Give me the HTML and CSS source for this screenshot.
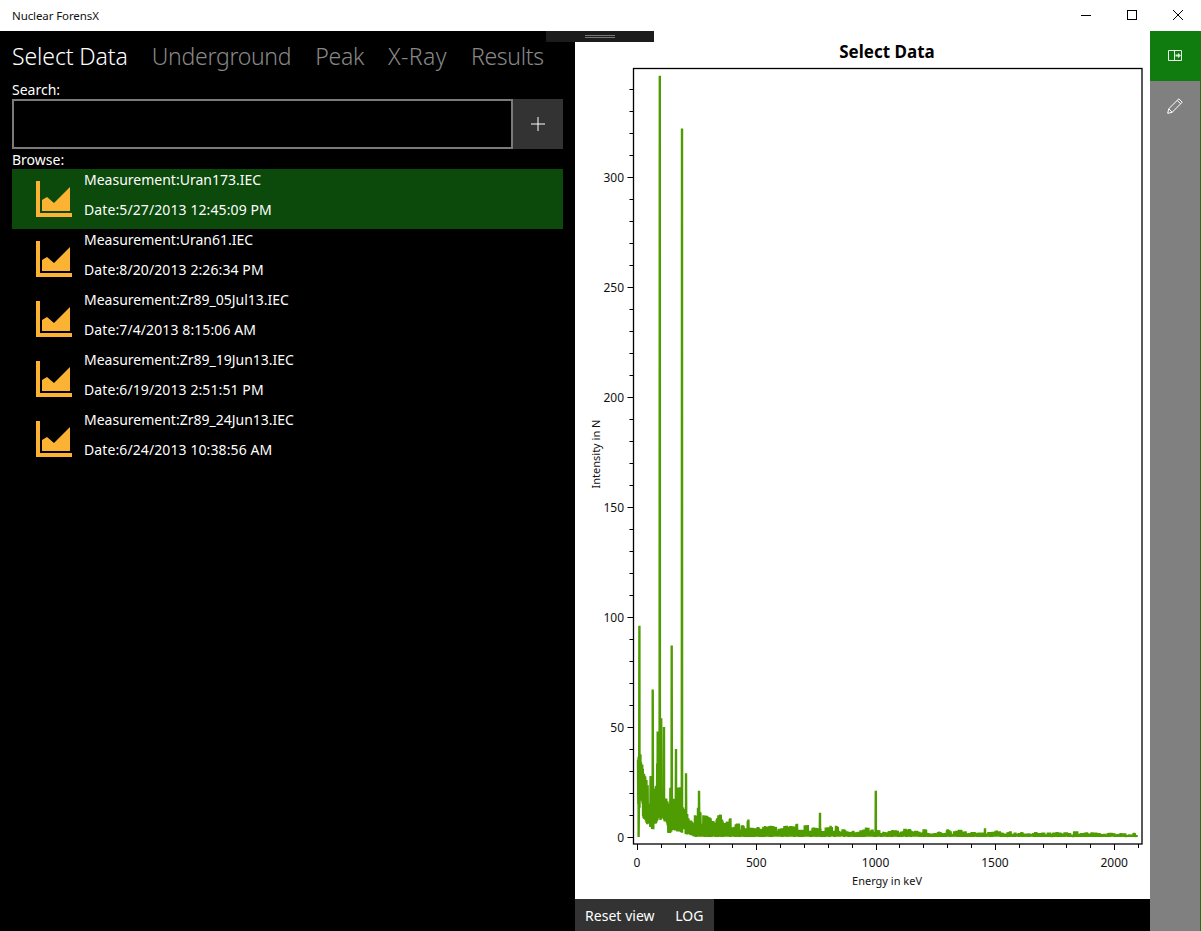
FILE: index.html
```html
<!DOCTYPE html>
<html lang="en">
<head>
<meta charset="utf-8">
<title>Nuclear ForensX</title>
<link rel="stylesheet" href="styles.css">
</head>
<body>
<div class="app">
  <header class="titlebar">
    <span class="app-title">Nuclear ForensX</span>
    <div class="win-controls">
      <button class="win-btn"><svg width="12" height="12" viewBox="0 0 12 12"><path d="M1 5.500h10" stroke="#000" fill="none"/></svg></button>
      <button class="win-btn"><svg width="12" height="12" viewBox="0 0 12 12"><rect x="1.500" y="0.500" width="9" height="9" stroke="#000" fill="none"/></svg></button>
      <button class="win-btn"><svg width="12" height="12" viewBox="0 0 12 12"><path d="M1 0l10 10M11 0L1 10" stroke="#000" fill="none"/></svg></button>
    </div>
  </header>
  <div class="drag-handle"><span class="grip"></span></div>
  <main class="main">
    <section class="left-pane">
      <nav class="pivot">
        <span class="pivot-item active">Select Data</span>
        <span class="pivot-item">Underground</span>
        <span class="pivot-item">Peak</span>
        <span class="pivot-item wide">X-Ray</span>
        <span class="pivot-item">Results</span>
      </nav>
      <label class="field-label search-label">Search:</label>
      <div class="search-row">
        <div class="search-box"></div>
        <button class="add-btn"><svg width="16" height="16" viewBox="0 0 16 16"><path d="M8 1v14M1 8h14" stroke="#fff" fill="none"/></svg></button>
      </div>
      <label class="field-label browse-label">Browse:</label>
      <ul class="list">
        <li class="row selected">
          <svg class="chart-icon" viewBox="0 0 36 36"><path d="M0 0h4v32h32v4H0z M6 30V19l5-3 7 6L34 6v24z"/></svg>
          <div class="row-text"><span>Measurement:Uran173.IEC</span><span class="row-date">Date:5/27/2013 12:45:09 PM</span></div>
        </li>
        <li class="row">
          <svg class="chart-icon" viewBox="0 0 36 36"><path d="M0 0h4v32h32v4H0z M6 30V19l5-3 7 6L34 6v24z"/></svg>
          <div class="row-text"><span>Measurement:Uran61.IEC</span><span class="row-date">Date:8/20/2013 2:26:34 PM</span></div>
        </li>
        <li class="row">
          <svg class="chart-icon" viewBox="0 0 36 36"><path d="M0 0h4v32h32v4H0z M6 30V19l5-3 7 6L34 6v24z"/></svg>
          <div class="row-text"><span>Measurement:Zr89_05Jul13.IEC</span><span class="row-date">Date:7/4/2013 8:15:06 AM</span></div>
        </li>
        <li class="row">
          <svg class="chart-icon" viewBox="0 0 36 36"><path d="M0 0h4v32h32v4H0z M6 30V19l5-3 7 6L34 6v24z"/></svg>
          <div class="row-text"><span>Measurement:Zr89_19Jun13.IEC</span><span class="row-date">Date:6/19/2013 2:51:51 PM</span></div>
        </li>
        <li class="row">
          <svg class="chart-icon" viewBox="0 0 36 36"><path d="M0 0h4v32h32v4H0z M6 30V19l5-3 7 6L34 6v24z"/></svg>
          <div class="row-text"><span>Measurement:Zr89_24Jun13.IEC</span><span class="row-date">Date:6/24/2013 10:38:56 AM</span></div>
        </li>
      </ul>
    </section>
    <section class="chart-pane">
      <div class="chart-area">
        <svg id="chart" class="chart" width="575" height="868" viewBox="575 31 575 868"></svg>
      </div>
      <div class="bottom-bar">
        <button class="bar-btn">Reset view</button>
        <button class="bar-btn">LOG</button>
      </div>
    </section>
    <aside class="side-rail">
      <button class="rail-btn active">
        <svg width="14" height="11" viewBox="0 0 14 11"><path d="M.5.500h13v10H.5zM6.500.500v10" fill="none" stroke="#fff" opacity=".9"/><path d="M7.500 4.500h2.500V3l3 2.500-3 2.500V6.500H7.500z" fill="#fff" opacity=".85"/></svg>
      </button>
      <button class="rail-btn">
        <svg width="16" height="16" viewBox="0 0 16 16"><path d="M.7 15.300l1-4.500L11.800.8l3.400 3.400L5.200 14.300zM1.700 10.800l3.500 3.500M10.200 2.400l3.400 3.400" fill="none" stroke="#fff"/></svg>
      </button>
    </aside>
  </main>
</div>
<script src="chart.js"></script>
</body>
</html>
```
FILE: styles.css
```css
* { box-sizing: border-box; }
html, body { margin: 0; height: 100%; }
body { font-family: "Noto Sans", "Open Sans", "Liberation Sans", sans-serif; background: #000; overflow: hidden; }
button { font: inherit; border: 0; padding: 0; margin: 0; }
.app { width: 1201px; height: 931px; display: flex; flex-direction: column; position: relative; }
.titlebar { height: 31px; background: #fff; display: flex; align-items: center; justify-content: space-between; padding-left: 12px; flex: none; }
.app-title { font-size: 11.500px; letter-spacing: -0.100px; color: #111; }
.win-controls { display: flex; }
.win-btn { width: 46px; height: 31px; background: transparent; display: flex; align-items: center; justify-content: center; }
.drag-handle { position: absolute; left: 546px; top: 31px; width: 108px; height: 11px; background: #1c1c1c; display: flex; justify-content: center; padding-top: 4px; }
.grip { display: block; width: 30px; height: 3px; border-top: 1px solid #777; border-bottom: 1px solid #777; }
.main { flex: 1; display: flex; min-height: 0; border-right: 1px solid #107c10; }
.left-pane { width: 575px; flex: none; background: #000; color: #fff; padding: 0 12px; display: flex; flex-direction: column; }
.pivot { display: flex; gap: 24px; height: 49px; align-items: center; }
.pivot-item { font-size: 23px; font-weight: 300; letter-spacing: -0.300px; color: #888; white-space: nowrap; line-height: 32px; }
.pivot-item.active { color: #fff; letter-spacing: -0.100px; }
.pivot-item.wide { letter-spacing: 0.400px; }
.field-label { font-size: 14px; line-height: 19px; display: block; color: #fff; }
.search-label { height: 19px; }
.search-row { display: flex; width: 551px; height: 50px; }
.search-box { flex: 1; border: 2px solid #7a7a7a; background: #000; }
.add-btn { width: 50px; background: #333; display: flex; align-items: center; justify-content: center; }
.browse-label { height: 20px; line-height: 21px; }
.list { list-style: none; margin: 0; padding: 0; width: 551px; }
.row { height: 60px; display: flex; padding-left: 24px; align-items: flex-start; }
.row.selected { background: #0b4a0b; }
.chart-icon { width: 36px; height: 36px; fill: #fcb334; flex: none; margin-top: 12px; }
.row-text { margin-left: 12px; display: flex; flex-direction: column; font-size: 14px; color: #fff; line-height: 30px; white-space: nowrap; margin-top: -4px; }
.row-date { letter-spacing: 0.100px; }
.chart-pane { width: 575px; flex: none; display: flex; flex-direction: column; background: #fff; }
.chart-area { flex: 1; min-height: 0; }
.chart { display: block; }
.bottom-bar { height: 32px; background: #000; display: flex; flex: none; }
.bar-btn { height: 32px; background: #333; color: #fff; font-size: 14px; letter-spacing: 0.040px; padding: 0 10.500px 0 10px; white-space: nowrap; }
.side-rail { width: 50px; flex: none; background: #808080; display: flex; flex-direction: column; }
.rail-btn { width: 50px; height: 50px; background: transparent; display: flex; align-items: center; justify-content: center; }
.rail-btn.active { background: #107c10; padding-bottom: 2px; }
.chart text { font-family: "Noto Sans", "Open Sans", "Liberation Sans", sans-serif; fill: #111; font-size: 12px; }
.chart .chart-title { font-size: 17px; font-weight: 700; fill: #000; }
.chart .axis-title { font-size: 11px; }
.chart .frame { fill: none; stroke: #000; stroke-width: 1.300; }
.chart .tick { stroke: #000; stroke-width: 1; }
.chart .series { fill: none; stroke: #4f9c02; stroke-width: 2.400; stroke-linejoin: bevel; }
```
FILE: chart.js
```js
(function () {
  var NS = 'http://www.w3.org/2000/svg';
  var svg = document.getElementById('chart');
  var X0 = 637, XS = 0.2386, Y0 = 837, YS = 2.2;
  var L = 633.5, R = 1142, T = 68.5, B = 844;
  function px(k) { return X0 + k * XS; }
  function py(v) { return Y0 - v * YS; }
  function el(name, attrs, text) {
    var e = document.createElementNS(NS, name);
    for (var a in attrs) e.setAttribute(a, attrs[a]);
    if (text !== undefined) e.textContent = text;
    svg.appendChild(e);
    return e;
  }
  var s = 20130527;
  function rnd() {
    s |= 0; s = s + 0x6D2B79F5 | 0;
    var t = Math.imul(s ^ s >>> 15, 1 | s);
    t = t + Math.imul(t ^ t >>> 7, 61 | t) ^ t;
    return ((t ^ t >>> 14) >>> 0) / 4294967296;
  }
  function lerp(tab, x) {
    for (var i = 1; i < tab.length; i++) {
      if (x <= tab[i][0]) {
        var a = tab[i - 1], b = tab[i];
        return a[1] + (b[1] - a[1]) * (x - a[0]) / (b[0] - a[0]);
      }
    }
    return tab[tab.length - 1][1];
  }
  var upper = [[638, 36], [642, 32], [648, 22], [652, 20], [658, 26], [665, 28], [672, 24], [680, 17], [690, 12], [697, 10], [710, 9], [730, 7], [760, 5.500], [800, 4.500], [850, 3.500], [900, 2.800], [1000, 2.300], [1100, 1.900], [1140, 1.300]];
  var lower = [[638, 16], [642, 10], [648, 4.500], [656, 4], [662, 9], [668, 3], [680, 3], [688, 1.500], [696, 0], [1140, 0]];
  var peaks = { 638.6: 0, 639.4: 96, 652.7: 67, 657.7: 48, 659.8: 346, 661.2: 54, 664: 50, 671.7: 87, 676: 40, 682: 322, 686: 29, 699: 21, 820: 11, 875.8: 21, 985: 4 };
  var spots = Object.keys(peaks).map(Number).sort(function (a, b) { return a - b; });
  var pts = [], next = 0, even = true, factor = 1, lowF = 1, until = 0;
  for (var x = 638; x <= 1137; x += 0.3) {
    while (next < spots.length && spots[next] <= x) {
      var sx = spots[next];
      pts.push(sx.toFixed(1) + ',' + py(peaks[sx]).toFixed(1));
      next++;
    }
    if (x >= until) {
      factor = 0.55 + rnd() * 0.6;
      if (rnd() < 0.12) factor = 1.35;
      lowF = 0.6 + rnd() * 1.1;
      until = x + 1 + rnd() * 2.5;
    }
    var u = lerp(upper, x) * factor, l = lerp(lower, x) * lowF;
    var r = rnd();
    var v = even ? Math.max(l, u * (0.85 + r * 0.15)) : l + r * 0.3;
    even = !even;
    pts.push(x.toFixed(1) + ',' + py(v).toFixed(1));
  }
  el('text', { x: 887, y: 58, 'text-anchor': 'middle', 'class': 'chart-title' }, 'Select Data');
  el('rect', { x: L, y: T, width: R - L, height: B - T, 'class': 'frame' });
  el('polyline', { points: pts.join(' '), 'class': 'series' });
  var k;
  for (k = 0; k <= 2100; k += 100) {
    var major = k % 500 === 0;
    var tx = Math.round(px(k)) + 0.5;
    el('line', { x1: tx, x2: tx, y1: B, y2: B + (major ? 6 : 4), 'class': 'tick' });
    if (major) el('text', { x: px(k), y: 867, 'text-anchor': 'middle' }, String(k));
  }
  for (k = 0; k <= 340; k += 10) {
    var maj = k % 50 === 0;
    var ty = Math.round(py(k)) + 0.5;
    el('line', { x1: L, x2: L - (maj ? 6 : 4), y1: ty, y2: ty, 'class': 'tick' });
    if (maj) el('text', { x: 624, y: py(k) + 4.500, 'text-anchor': 'end' }, String(k));
  }
  el('text', { x: 887, y: 885, 'text-anchor': 'middle', 'class': 'axis-title' }, 'Energy in keV');
  el('text', { x: 0, y: 0, 'text-anchor': 'middle', 'class': 'axis-title', transform: 'translate(600 454) rotate(-90)' }, 'Intensity in N');
})();
```
